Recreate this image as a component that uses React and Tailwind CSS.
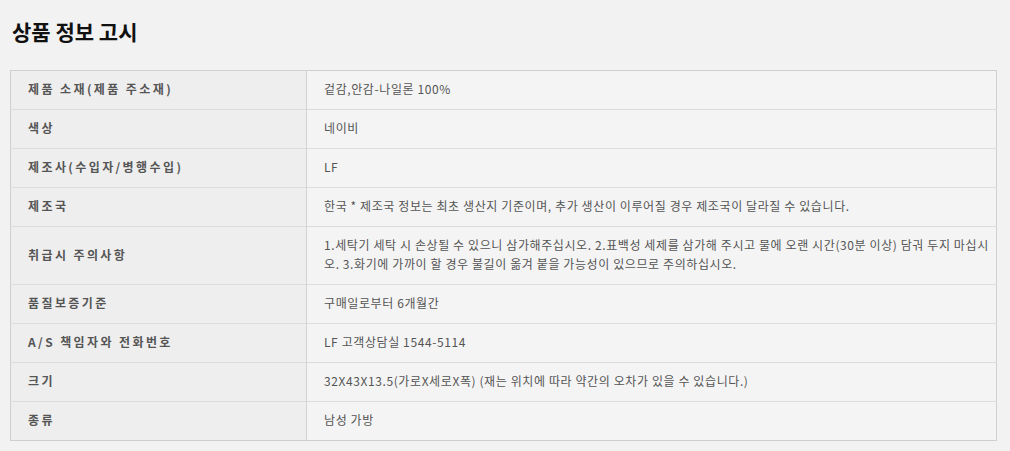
import React from "react";

const rows = [
  ["제품 소재(제품 주소재)", "겉감,안감-나일론 100%"],
  ["색상", "네이비"],
  ["제조사(수입자/병행수입)", "LF"],
  ["제조국", "한국 * 제조국 정보는 최초 생산지 기준이며, 추가 생산이 이루어질 경우 제조국이 달라질 수 있습니다."],
  [
    "취급시 주의사항",
    [
      "1.세탁기 세탁 시 손상될 수 있으니 삼가해주십시오. 2.표백성 세제를 삼가해 주시고 물에 오랜 시간(30분 이상) 담궈 두지 마십시",
      "오. 3.화기에 가까이 할 경우 불길이 옮겨 붙을 가능성이 있으므로 주의하십시오.",
    ],
  ],
  ["품질보증기준", "구매일로부터 6개월간"],
  ["A/S 책임자와 전화번호", "LF 고객상담실 1544-5114"],
  ["크기", "32X43X13.5(가로X세로X폭) (재는 위치에 따라 약간의 오차가 있을 수 있습니다.)"],
  ["종류", "남성 가방"],
];

export default function App() {
  return (
    <div
      className="min-h-screen bg-[#f2f2f2] px-[10px] pt-[17px]"
      style={{ fontFamily: '"Noto Sans CJK KR", "Noto Sans", sans-serif' }}
    >
      <h2 className="pl-[2px] text-[21px] leading-[28px] font-bold text-[#111]">상품 정보 고시</h2>
      <table className="mt-[25px] w-[987px] table-fixed border-collapse border border-[#cfcfcf]">
        <colgroup>
          <col className="w-[296px]" />
          <col />
        </colgroup>
        <tbody>
          {rows.map(([k, v], i) => (
            <tr key={i} className="border-b border-[#dcdcdc] last:border-b-0">
              <th className="border-r border-[#d2d2d2] bg-[#eeeeee] pl-[17px] pr-[10px] pt-[8px] pb-[11px] text-left align-middle text-[12px] leading-[19px] font-bold tracking-[2.4px] text-[#555]">
                {k}
              </th>
              <td className="bg-[#f4f4f4] pl-[17px] pr-[4px] pt-[8px] pb-[11px] align-middle text-[12px] leading-[19px] tracking-[0.6px] text-[#555]">
                {Array.isArray(v) ? (
                  v.map((line, j) => (
                    <span key={j} className="block whitespace-nowrap">
                      {line}
                    </span>
                  ))
                ) : (
                  v
                )}
              </td>
            </tr>
          ))}
        </tbody>
      </table>
    </div>
  );
}
